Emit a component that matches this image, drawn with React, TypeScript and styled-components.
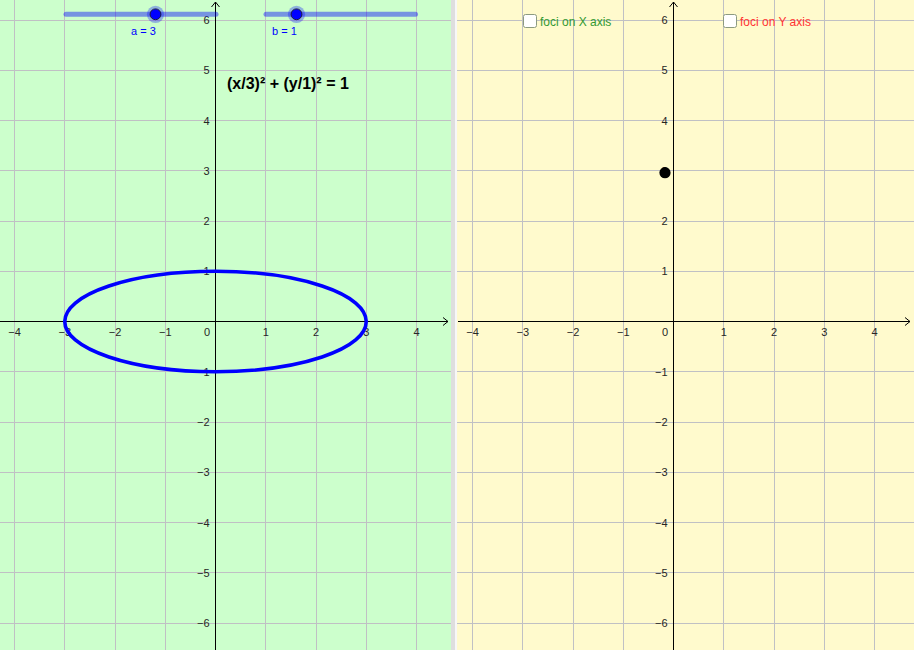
import React from 'react';
import styled, { createGlobalStyle } from 'styled-components';

const GlobalStyle = createGlobalStyle`
  html, body {
    margin: 0;
    padding: 0;
    overflow: hidden;
    background: #ffffff;
  }
  body {
    font-family: "Liberation Sans", Arial, sans-serif;
  }
`;

const SCALE = 50.25;
const GRID = '#c0c0c4';

const Applet = styled.div`
  display: flex;
  width: 914px;
  height: 650px;
`;

const Panel = styled.div<{ $bg: string; $width: number }>`
  position: relative;
  flex: 0 0 ${(p) => p.$width}px;
  height: 650px;
  background: ${(p) => p.$bg};
  overflow: hidden;
`;

const Divider = styled.div`
  flex: 0 0 6px;
  height: 650px;
  background: linear-gradient(to right, #dedede 0 4px, #f7f7f7 4px 6px);
`;

const Canvas = styled.svg`
  position: absolute;
  inset: 0;
  display: block;
`;

const AxisLabel = styled.text`
  font-family: "Liberation Sans", Arial, sans-serif;
  font-size: 11px;
  fill: #262626;
`;

const SliderWrap = styled.div<{ $left: number; $width: number }>`
  position: absolute;
  left: ${(p) => p.$left}px;
  top: 4px;
  width: ${(p) => p.$width}px;
  display: flex;
  flex-direction: column;
`;

const SliderLabel = styled.div<{ $indent: number }>`
  margin-left: ${(p) => p.$indent}px;
  font-size: 11px;
  line-height: 12px;
  color: #0000ff;
  white-space: pre;
`;

const Equation = styled.div`
  position: absolute;
  left: 227px;
  top: 76px;
  font-size: 16px;
  line-height: 16px;
  font-weight: bold;
  color: #000000;
  white-space: pre;
`;

const CheckRow = styled.label<{ $left: number }>`
  position: absolute;
  left: ${(p) => p.$left}px;
  top: 14px;
  display: flex;
  align-items: center;
  gap: 3px;
  height: 14px;
  cursor: pointer;
`;

const Box = styled.span`
  box-sizing: border-box;
  width: 14px;
  height: 14px;
  border: 1.5px solid #8c9a80;
  border-radius: 2.5px;
  background: #ffffff;
`;

const CheckText = styled.span<{ $color: string }>`
  font-size: 12px;
  line-height: 14px;
  padding-top: 2px;
  color: ${(p) => p.$color};
  white-space: pre;
`;

const fmt = (k: number) => (k < 0 ? `\u2212${-k}` : `${k}`);

type GraphProps = {
  width: number;
  ox: number;
  oy: number;
  axisStart: number;
  tipX: number;
  children?: React.ReactNode;
};

const Graph: React.FC<GraphProps> = ({ width, ox, oy, axisStart, tipX, children }) => {
  const h = 650;
  const xs: number[] = [];
  for (let k = Math.ceil(-ox / SCALE); k <= Math.floor((width - ox) / SCALE); k++) xs.push(k);
  const ys: number[] = [];
  for (let k = Math.ceil((oy - h) / SCALE); k <= Math.floor(oy / SCALE); k++) ys.push(k);

  return (
    <Canvas width={width} height={h} viewBox={`0 0 ${width} ${h}`}>
      <g stroke={GRID} strokeWidth={1} shapeRendering="crispEdges">
        {xs.filter((k) => k !== 0).map((k) => (
          <line key={`gx${k}`} x1={ox + k * SCALE} y1={0} x2={ox + k * SCALE} y2={h} />
        ))}
        {ys.filter((k) => k !== 0).map((k) => (
          <line key={`gy${k}`} x1={0} y1={oy - k * SCALE} x2={width} y2={oy - k * SCALE} />
        ))}
      </g>

      <g stroke="#000" strokeWidth={1} fill="none">
        <line x1={axisStart} y1={oy} x2={tipX} y2={oy} shapeRendering="crispEdges" />
        <polyline points={`${tipX - 5},${oy - 4} ${tipX},${oy} ${tipX - 5},${oy + 4}`} />
        <line x1={ox} y1={h} x2={ox} y2={2} shapeRendering="crispEdges" />
        <polyline points={`${ox - 4},${7} ${ox},${2} ${ox + 4},${7}`} />
      </g>

      {xs.filter((k) => k !== 0).map((k) => (
        <AxisLabel key={`lx${k}`} x={ox + k * SCALE} y={oy + 14} textAnchor="middle">
          {fmt(k)}
        </AxisLabel>
      ))}
      <AxisLabel x={ox - 5.5} y={oy + 14} textAnchor="end">
        0
      </AxisLabel>
      {ys.filter((k) => k !== 0).map((k) => (
        <AxisLabel key={`ly${k}`} x={ox - 6} y={oy - k * SCALE + 4} textAnchor="end">
          {fmt(k)}
        </AxisLabel>
      ))}

      {children}
    </Canvas>
  );
};

type SliderProps = { x1: number; x2: number; knob: number; label: string; labelX: number };

const Slider: React.FC<SliderProps> = ({ x1, x2, knob, label, labelX }) => {
  const left = x1 - 10;
  const w = x2 - x1 + 20;
  return (
    <SliderWrap $left={left} $width={w}>
      <svg width={w} height={21} viewBox={`0 0 ${w} 21`}>
        <line x1={10} y1={10.3} x2={w - 10} y2={10.3} stroke="rgba(0,0,255,0.42)" strokeWidth={5} strokeLinecap="round" />
        <circle cx={knob - left} cy={10.3} r={8.6} fill="rgba(0,0,255,0.3)" />
        <circle cx={knob - left} cy={10.3} r={5.4} fill="#0000ff" stroke="#1a1a40" strokeWidth={1} />
      </svg>
      <SliderLabel $indent={labelX - left}>{label}</SliderLabel>
    </SliderWrap>
  );
};

const App: React.FC = () => {
  return (
    <>
      <GlobalStyle />
      <Applet>
        <Panel $bg="#ccffcc" $width={451}>
          <Graph width={451} ox={215.5} oy={321.5} axisStart={0} tipX={448}>
            <ellipse cx={215.5} cy={321.5} rx={3 * SCALE} ry={SCALE} fill="none" stroke="#0000ff" strokeWidth={3.6} />
          </Graph>
          <Slider x1={65.5} x2={215.5} knob={155} label="a = 3" labelX={131} />
          <Slider x1={265.5} x2={415} knob={296} label="b = 1" labelX={272} />
          <Equation>(x/3)² + (y/1)² = 1</Equation>
        </Panel>
        <Divider />
        <Panel $bg="#fffacd" $width={457}>
          <Graph width={457} ox={216.5} oy={321.5} axisStart={1} tipX={453}>
            <circle cx={208} cy={172.7} r={5.6} fill="#000" />
          </Graph>
          <CheckRow $left={66}>
            <Box />
            <CheckText $color="#339933">foci on X axis</CheckText>
          </CheckRow>
          <CheckRow $left={266}>
            <Box />
            <CheckText $color="#ff3333">foci on Y axis</CheckText>
          </CheckRow>
        </Panel>
      </Applet>
    </>
  );
};

export default App;
